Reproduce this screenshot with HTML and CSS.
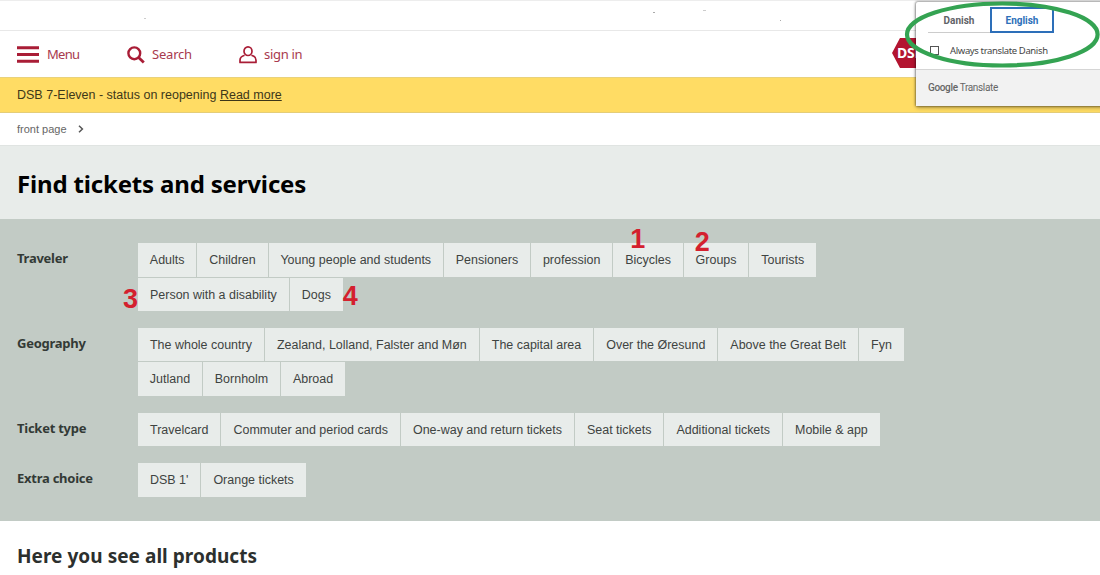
FILE: index.html
```html
<!DOCTYPE html>
<html lang="en">
<head>
<meta charset="utf-8">
<title>DSB - Find tickets and services</title>
<link rel="stylesheet" href="styles.css">
</head>
<body>
<div class="topbar"><i class="speck speck-a"></i><i class="speck speck-b"></i><i class="speck speck-c"></i><i class="speck speck-d"></i></div>
<header class="nav">
  <a class="nav-item menu"><svg width="22" height="17" viewBox="0 0 22 17"><path d="M0 1.7h22M0 8.5h22M0 15.2h22" stroke="currentColor" stroke-width="3"/></svg><span>Menu</span></a>
  <a class="nav-item search"><svg width="18" height="18" viewBox="0 0 18 18" fill="none" stroke="currentColor"><circle cx="7.3" cy="7.3" r="5.9" stroke-width="2.4"/><path d="M11.6 11.6l5.2 5" stroke-width="2.8"/></svg><span>Search</span></a>
  <a class="nav-item signin"><svg width="18" height="18" viewBox="0 0 18 18" fill="none" stroke="currentColor" stroke-width="1.7"><ellipse cx="9" cy="5.2" rx="4" ry="4.3"/><path d="M5.6 9.2C2.3 10.1 1 12 1 14.2V16.4H17V14.2C17 12 15.7 10.1 12.4 9.2" stroke-linejoin="round"/></svg><span>sign in</span></a>
  <div class="logo"><svg width="52" height="30" viewBox="0 0 52 30"><path d="M8 0H44L52 15 44 30H8L0 15Z" fill="#b31430"/></svg><b>DSB</b></div>
</header>
<div class="alert"><span>DSB 7-Eleven - status on reopening</span> <a>Read more</a></div>
<div class="crumbs"><span>front page</span><svg width="6" height="8" viewBox="0 0 6 8"><path d="M1 .8L4.4 4 1 7.2" fill="none" stroke="#555" stroke-width="1.5"/></svg></div>
<section class="hero"><h1>Find tickets and services</h1></section>
<section class="filters">
  <div class="group"><h3>Traveler</h3>
    <div class="rows">
      <div class="chips tight"><a>Adults</a><a>Children</a><a>Young people and students</a><a>Pensioners</a><a>profession</a><a>Bicycles<em class="mark m1">1</em></a><a>Groups<em class="mark m2">2</em></a><a>Tourists</a></div>
      <div class="chips"><a>Person with a disability<em class="mark m3">3</em></a><a>Dogs<em class="mark m4">4</em></a></div>
    </div></div>
  <div class="group"><h3>Geography</h3>
    <div class="rows">
      <div class="chips"><a>The whole country</a><a>Zealand, Lolland, Falster and Møn</a><a>The capital area</a><a>Over the Øresund</a><a>Above the Great Belt</a><a>Fyn</a></div>
      <div class="chips tight"><a>Jutland</a><a>Bornholm</a><a>Abroad</a></div>
    </div></div>
  <div class="group"><h3>Ticket type</h3>
    <div class="rows"><div class="chips"><a>Travelcard</a><a>Commuter and period cards</a><a>One-way and return tickets</a><a>Seat tickets</a><a>Additional tickets</a><a>Mobile &amp; app</a></div></div></div>
  <div class="group"><h3>Extra choice</h3>
    <div class="rows"><div class="chips"><a>DSB 1'</a><a>Orange tickets</a></div></div></div>
</section>
<section class="products"><h2>Here you see all products</h2></section>
<aside class="translate">
  <div class="tabs"><span class="tab">Danish</span><span class="tab active">English</span></div>
  <label class="always"><i class="box"></i><span>Always translate Danish</span></label>
  <div class="brand"><b>Google</b><span>Translate</span></div>
</aside>
<svg class="ring" width="200" height="72" viewBox="0 0 200 72"><ellipse cx="102.3" cy="34.5" rx="95.3" ry="31" fill="none" stroke="#34a352" stroke-width="4.2"/></svg>
</body>
</html>
```
FILE: styles.css
```css
* { box-sizing: border-box; }
body { margin: 0; width: 1100px; height: 575px; position: relative; overflow: hidden; background: #fff; color: #3a3f3d; font-family: "Liberation Sans", Arial, sans-serif; }
h1, h2, h3 { margin: 0; font-family: "Noto Sans", sans-serif; font-weight: 700; white-space: nowrap; }
.topbar { position: relative; height: 31px; border-top: 1px solid #ededed; border-bottom: 1px solid #e8e8e8; }
.speck { position: absolute; width: 2px; height: 1px; background: #aaa; }
.speck-a { left: 144px; top: 17px; background: #ccc; }
.speck-b { left: 653px; top: 11px; }
.speck-c { left: 703px; top: 9px; width: 3px; background: #ccc; }
.speck-d { left: 780px; top: 19px; width: 1px; }
.nav { height: 46px; display: flex; align-items: center; padding-left: 17px; color: #a91d36; position: relative; font-family: "Noto Sans", sans-serif; font-size: 13px; letter-spacing: -.2px; }
.nav-item { display: flex; align-items: center; white-space: nowrap; padding-top: 1px; }
.nav-item span { color: #a83a4e; line-height: 20px; padding-bottom: 2px; }
.menu { width: 110px; gap: 8px; letter-spacing: -.7px; }
.search { width: 112px; gap: 7px; }
.signin { gap: 7px; letter-spacing: -.3px; }
.logo { position: absolute; left: 892px; top: 7px; height: 30px; }
.logo b { position: absolute; left: 5px; top: 5px; font-size: 14px; line-height: 20px; color: #fff; }
.alert { height: 36px; border-top: 1px solid #e9d27c; border-bottom: 1px solid #e4cd78; background: #ffdc64; padding-left: 17px; font-size: 12.5px; line-height: 35px; color: #3d3719; white-space: nowrap; }
.alert a { text-decoration: underline; }
.crumbs { height: 32px; padding-left: 17px; display: flex; align-items: center; gap: 11px; font-size: 11px; color: #666; }
.hero { height: 74px; background: #e8ecea; border-top: 1px solid #e0e4e2; padding: 20px 0 0 17px; }
.hero h1 { font-size: 24px; letter-spacing: -.17px; line-height: 36px; color: #000; }
.filters { height: 302px; background: #c2cbc5; padding: 24px 0 0 17px; display: flex; flex-direction: column; gap: 16.9px; }
.group { display: flex; }
.group h3 { width: 121px; font-size: 13px; letter-spacing: -.25px; line-height: 20px; padding-top: 5px; color: #333a36; height: 25px; }
.rows { display: flex; flex-direction: column; gap: 1px; }
.chips { display: flex; gap: 1px; }
.chips a { position: relative; height: 33.5px; padding: 0 12px; background: #e8ecea; font-size: 12.47px; line-height: 35px; color: #3e4341; white-space: nowrap; }
.tight a { padding: 0 11.87px; }
.mark { position: absolute; font-style: normal; font-weight: 700; font-size: 27px; line-height: 30px; color: #d4202e; }
.m1 { left: 17px; top: -19px; }
.m2 { left: 11px; top: -16px; }
.m3 { left: -15px; top: 6px; }
.m4 { left: 53px; top: 3px; }
.products { padding: 20px 0 0 17px; }
.products h2 { font-size: 19px; letter-spacing: .04px; line-height: 30px; color: #2c302e; }
.translate { position: absolute; left: 916px; top: 2px; width: 190px; height: 104px; background: #fff; border-radius: 2px; box-shadow: 0 0 2px 1px rgba(0,0,0,.35), 0 2px 4px rgba(0,0,0,.25); font-family: Roboto, sans-serif; }
.tabs { display: flex; margin-left: 12px; padding-top: 5px; }
.tab { width: 62px; height: 26px; border-bottom: 1px solid #ccc; font-size: 10px; line-height: 27px; font-weight: 700; text-align: center; color: #5f6368; }
.tab.active { width: 64px; border: 2px solid #2d6fb9; line-height: 23px; color: #2d6fb9; }
.always { height: 36px; padding: 0 0 1px 14px; display: flex; align-items: center; gap: 11px; font-family: "Noto Sans", sans-serif; font-size: 9.5px; letter-spacing: -.37px; color: #444; white-space: nowrap; }
.box { width: 9px; height: 9px; border: 1px solid #555; }
.brand { height: 37px; padding: 0 0 1px 12px; background: #f2f2f2; border-top: 1px solid #d5d5d5; display: flex; align-items: center; gap: 2px; font-size: 10px; letter-spacing: -.35px; color: #666; }
.brand b { font-weight: 500; }
.ring { position: absolute; left: 900px; top: 0; }
```
